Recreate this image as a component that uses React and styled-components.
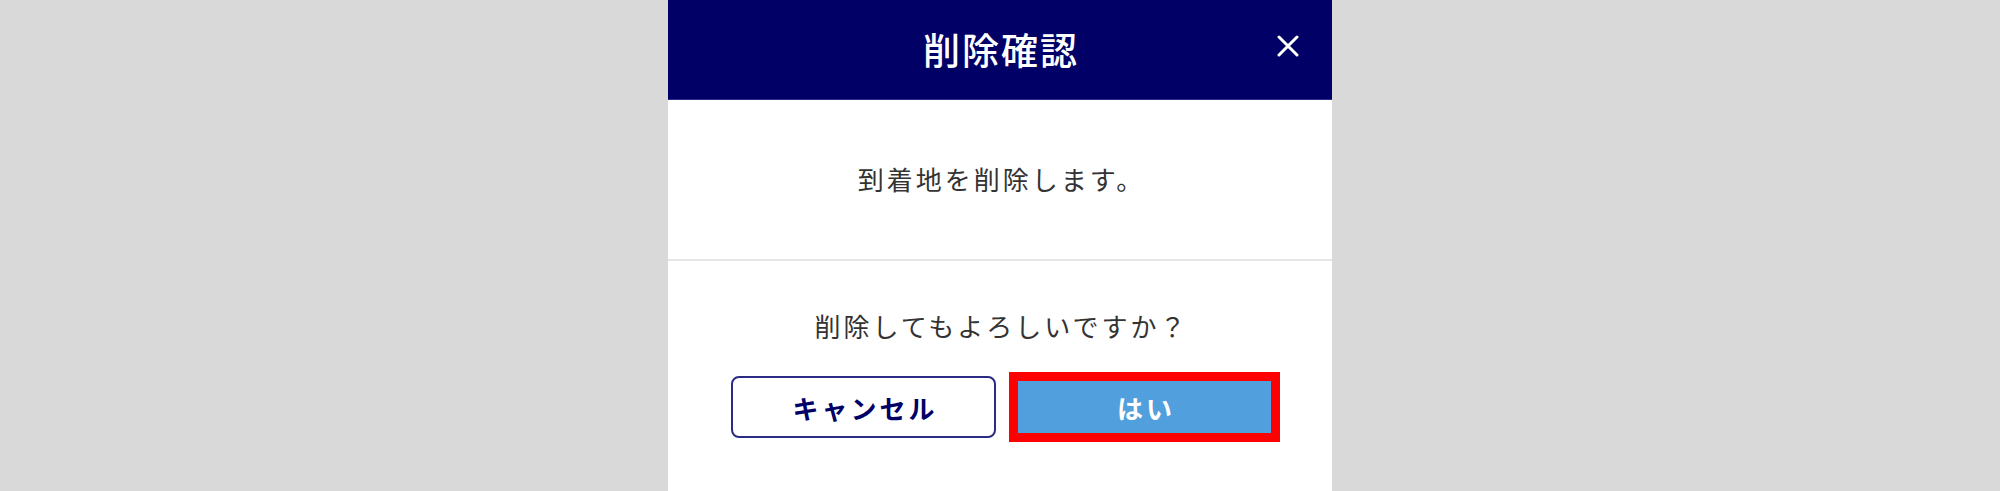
import React from "react";
import styled, { createGlobalStyle } from "styled-components";

const GlobalStyle = createGlobalStyle`
  html, body {
    margin: 0;
    padding: 0;
    background: #d9d9d9;
  }
  body {
    font-family: "Noto Sans CJK JP", "Noto Sans", sans-serif;
  }
`;

const CloseIcon = () => (
  <svg width="22" height="22" viewBox="0 0 22 22">
    <path
      d="M2 2 L20 20 M20 2 L2 20"
      stroke="#ffffff"
      strokeWidth="3"
      strokeLinecap="round"
    />
  </svg>
);

const App = () => {
  return (
    <>
      <GlobalStyle />
      <Page>
        <Dialog>
          <Header>
            <Title>削除確認</Title>
            <CloseButton aria-label="閉じる">
              <CloseIcon />
            </CloseButton>
          </Header>
          <Message>
            <Text>到着地を削除します。</Text>
          </Message>
          <Footer>
            <Text>削除してもよろしいですか？</Text>
            <Buttons>
              <Button>キャンセル</Button>
              <Button primary>はい</Button>
            </Buttons>
          </Footer>
        </Dialog>
      </Page>
    </>
  );
};

const Page = styled.div`
  min-height: 491px;
  display: flex;
  justify-content: center;
`;

const Dialog = styled.div`
  width: 664px;
  min-height: 491px;
  background: #ffffff;
  display: flex;
  flex-direction: column;
`;

const Header = styled.div`
  position: relative;
  height: 99px;
  background: #000066;
  border-bottom: 1px solid #2e2e86;
  display: flex;
  align-items: center;
  justify-content: center;
`;

const Title = styled.h1`
  margin: 0;
  color: #ffffff;
  font-size: 37px;
  font-weight: 500;
  letter-spacing: 2px;
  line-height: 1;
  padding-left: 2px;
`;

const CloseButton = styled.button`
  position: absolute;
  right: 33px;
  top: 35px;
  width: 22px;
  height: 22px;
  padding: 0;
  border: 0;
  background: transparent;
  display: flex;
  cursor: pointer;
`;

const Message = styled.div`
  height: 161px;
  border-bottom: 2px solid #e6e6e6;
  display: flex;
  align-items: center;
  justify-content: center;
  padding-bottom: 2px;
  box-sizing: border-box;
`;

const Text = styled.p`
  margin: 0;
  color: #333333;
  font-size: 26px;
  line-height: 36px;
  letter-spacing: 3px;
  text-align: center;
  padding-left: 3px;
`;

const Footer = styled.div`
  padding-top: 47px;
  display: flex;
  flex-direction: column;
  align-items: center;
`;

const Buttons = styled.div`
  margin-top: 28px;
  display: flex;
  align-items: center;
  gap: 13px;
  padding-left: 11px;
`;

const Button = styled.button`
  box-sizing: border-box;
  width: ${(p) => (p.primary ? "271px" : "265px")};
  height: ${(p) => (p.primary ? "70px" : "62px")};
  border: ${(p) => (p.primary ? "9px solid #ff0000" : "2px solid #2b2b86")};
  border-radius: ${(p) => (p.primary ? "0" : "8px")};
  background: ${(p) => (p.primary ? "#529fdd" : "#ffffff")};
  color: ${(p) => (p.primary ? "#ffffff" : "#000066")};
  font-family: "Noto Sans CJK JP", "Noto Sans", sans-serif;
  font-size: 26px;
  font-weight: 700;
  letter-spacing: 3px;
  padding: 0 0 0 3px;
  cursor: pointer;
`;

export default App;
